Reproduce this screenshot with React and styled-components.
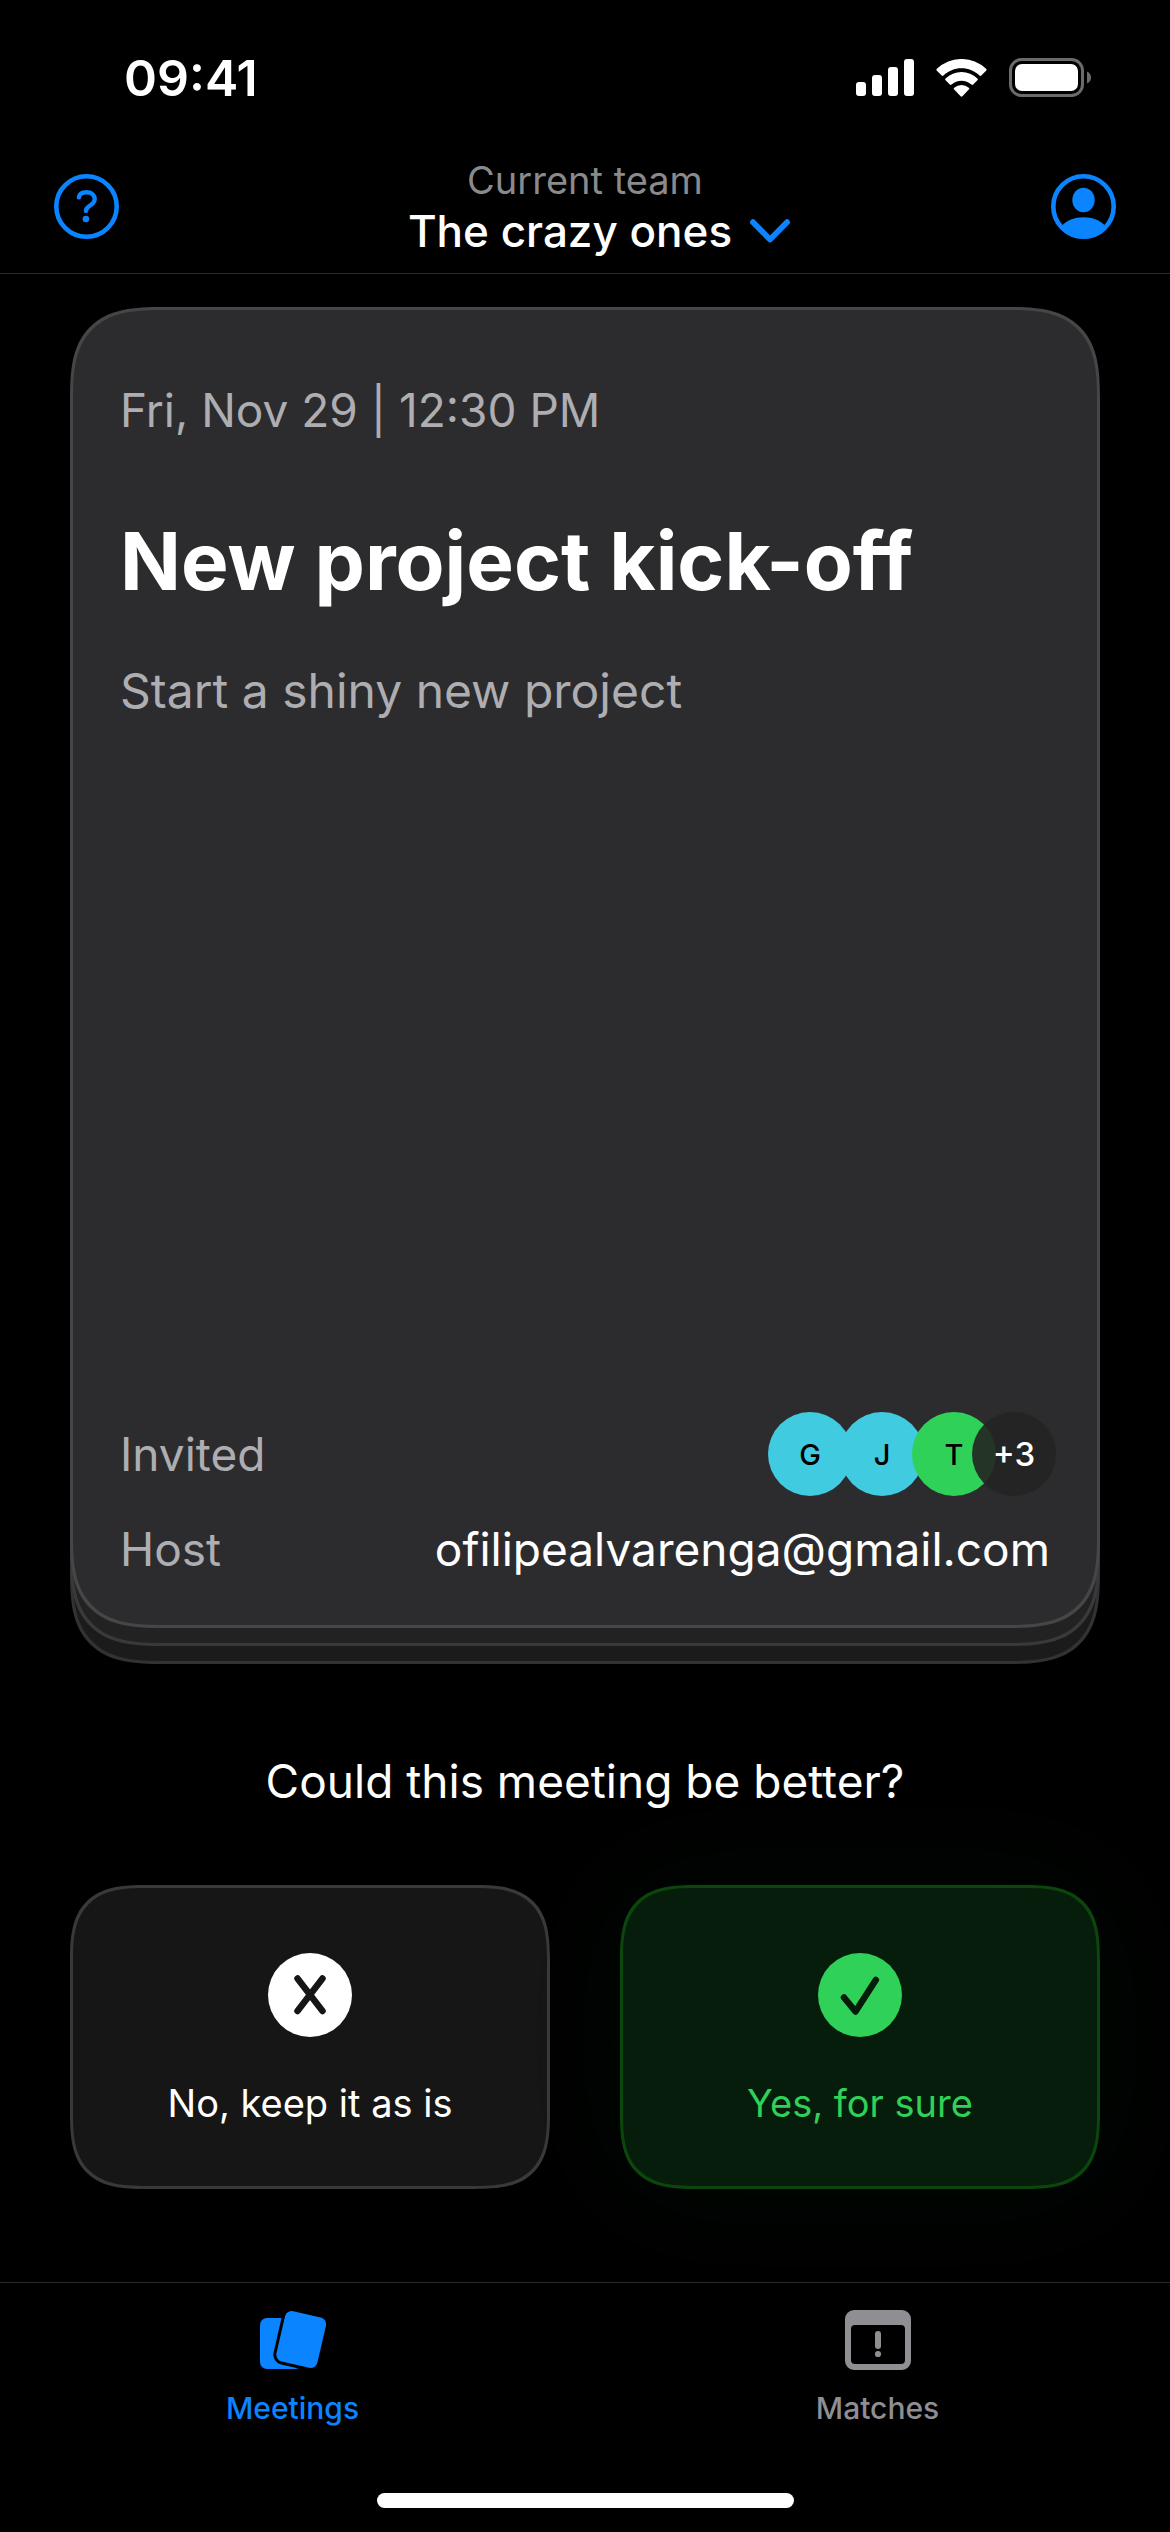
import styled, { createGlobalStyle } from "styled-components";
import { useState } from "react";

const GlobalStyle = createGlobalStyle`
  * {
    box-sizing: border-box;
  }

  body {
    margin: 0;
    background-color: #000;
    color: #fff;
    font-family: Inter, "Liberation Sans", sans-serif;
  }

  button {
    margin: 0;
    padding: 0;
    border: none;
    background: none;
    color: inherit;
    font: inherit;
    cursor: pointer;
  }

  svg {
    display: block;
    flex: none;
  }
`;

const invited = [
  { initial: "G", color: "#40cbe0" },
  { initial: "J", color: "#40cbe0" },
  { initial: "T", color: "#30d158" },
];

const SignalIcon = () => (
  <svg width="58" height="38" viewBox="0 0 58 38" fill="#fff">
    <rect x="0" y="23" width="10" height="14" rx="3" />
    <rect x="16" y="16" width="10" height="21" rx="3" />
    <rect x="32" y="8" width="10" height="29" rx="3" />
    <rect x="48" y="0" width="10" height="37" rx="3" />
  </svg>
);

const WifiIcon = () => (
  <svg width="51" height="38" viewBox="0 -1.7 51 38" fill="#fff">
    <path d="M25.5 7.6c6.9 0 13.2 2.600 18 7.200a1.300 1.300 0 0 0 1.800 0l4.800-4.800a1.300 1.300 0 0 0 0-1.900A35.700 35.700 0 0 0 .9 8.100a1.300 1.300 0 0 0 0 1.900l4.800 4.800a1.300 1.300 0 0 0 1.800 0c4.800-4.600 11.100-7.200 18-7.200z" />
    <path d="M25.5 20c3.700 0 7.200 1.400 9.900 3.900a1.300 1.300 0 0 0 1.800 0l4.200-4.300a1.300 1.300 0 0 0 0-1.900 23.200 23.200 0 0 0-31.800 0 1.300 1.300 0 0 0 0 1.900l4.200 4.300a1.300 1.300 0 0 0 1.800 0c2.700-2.500 6.200-3.900 9.900-3.900z" />
    <path d="M32.8 28.900a1.300 1.300 0 0 0 0-1.900 11.400 11.400 0 0 0-14.600 0 1.300 1.300 0 0 0 0 1.900l6.400 6.700a1.300 1.300 0 0 0 1.800 0z" />
  </svg>
);

const BatteryIcon = () => (
  <svg width="82" height="39" viewBox="0 0 82 39">
    <rect
      x="1.5"
      y="1.5"
      width="72"
      height="36"
      rx="11"
      fill="none"
      stroke="#6b6b6b"
      strokeWidth="3"
    />
    <rect x="6" y="6" width="63" height="27" rx="7" fill="#fff" />
    <path d="M78 13.5c2.500 1 4 3.300 4 6s-1.500 5-4 6z" fill="#6b6b6b" />
  </svg>
);

const HelpIcon = () => (
  <svg width="65" height="65" viewBox="0 0 65 65" fill="none">
    <circle cx="32.5" cy="32.5" r="30.2" stroke="#0a84ff" strokeWidth="4.6" />
    <path
      d="M24.900 23.400c.4-3.400 3.400-5.200 7.600-5.200 4.900 0 8.200 2.700 8.200 7 0 6.200-8.800 6.300-8.800 11.700"
      stroke="#0a84ff"
      strokeWidth="4.4"
      strokeLinecap="round"
    />
    <circle cx="31.9" cy="45" r="3.3" fill="#0a84ff" />
  </svg>
);

const ProfileIcon = () => (
  <svg width="65" height="65" viewBox="0 0 65 65" fill="#0a84ff">
    <circle
      cx="32.5"
      cy="32.5"
      r="30.2"
      fill="none"
      stroke="#0a84ff"
      strokeWidth="4.6"
    />
    <ellipse cx="32.5" cy="26" rx="11.2" ry="12.2" />
    <path d="M10.700 52C15.500 46.500 23.500 43.200 32.500 43.200S49.500 46.500 54.300 52l-1 5A32 32 0 0 1 11.700 57z" />
  </svg>
);

const ChevronIcon = () => (
  <svg width="40" height="24" viewBox="0 0 40 24" fill="none">
    <path
      d="M3 3.200 20 20.500 37 3.200"
      stroke="#0a84ff"
      strokeWidth="5.8"
      strokeLinecap="round"
      strokeLinejoin="round"
    />
  </svg>
);

const CrossIcon = () => (
  <svg width="84" height="84" viewBox="0 0 84 84" fill="none">
    <circle cx="42" cy="42" r="42" fill="#fff" />
    <path
      d="M29.500 25.500 54.500 58M54.500 25.500 29.500 58"
      stroke="#161616"
      strokeWidth="6.5"
      strokeLinecap="round"
    />
  </svg>
);

const CheckIcon = () => (
  <svg width="84" height="84" viewBox="0 0 84 84" fill="none">
    <circle cx="42" cy="42" r="42" fill="#30d158" />
    <path
      d="M26 44.500 37.500 58.500 57.800 27"
      stroke="#061c0b"
      strokeWidth="6.5"
      strokeLinecap="round"
      strokeLinejoin="round"
    />
  </svg>
);

const MeetingsIcon = () => (
  <svg width="66" height="60" viewBox="0 0 66 60" fill="currentColor">
    <rect x="0" y="8" width="42" height="51" rx="7" />
    <rect
      x="20.2"
      y="3.7"
      width="42"
      height="51.6"
      rx="7"
      transform="rotate(13 41.2 29.5)"
      stroke="#000"
      strokeWidth="6"
      paintOrder="stroke"
    />
  </svg>
);

const MatchesIcon = () => (
  <svg width="66" height="60" viewBox="0 0 66 60" fill="currentColor">
    <path
      fillRule="evenodd"
      d="M9 0h48a9 9 0 0 1 9 9v42a9 9 0 0 1-9 9H9a9 9 0 0 1-9-9V9a9 9 0 0 1 9-9zm1 15a4 4 0 0 0-4 4v31a4 4 0 0 0 4 4h46a4 4 0 0 0 4-4V19a4 4 0 0 0-4-4z"
    />
    <rect x="30" y="21" width="6" height="18" rx="3" />
    <circle cx="33" cy="44" r="3.1" />
  </svg>
);

export default function App() {
  const [tab, setTab] = useState("meetings");

  return (
    <Screen>
      <GlobalStyle />
      <StatusBar>
        <Time>09:41</Time>
        <StatusIcons>
          <SignalIcon />
          <WifiIcon />
          <BatteryIcon />
        </StatusIcons>
      </StatusBar>

      <Header>
        <button type="button" aria-label="Help">
          <HelpIcon />
        </button>
        <Team>
          <TeamCaption>Current team</TeamCaption>
          <TeamButton type="button">
            The crazy ones
            <ChevronIcon />
          </TeamButton>
        </Team>
        <button type="button" aria-label="Profile">
          <ProfileIcon />
        </button>
      </Header>

      <Main>
        <Stack>
          <Sheet $depth={2} />
          <Sheet $depth={1} />
          <Sheet as="article" $depth={0}>
            <Label>Fri, Nov 29 | 12:30 PM</Label>
            <Title>New project kick-off</Title>
            <Description>Start a shiny new project</Description>
            <Details>
              <DetailRow>
                <Label>Invited</Label>
                <Avatars>
                  {invited.map((person) => (
                    <Avatar key={person.initial} $color={person.color}>
                      {person.initial}
                    </Avatar>
                  ))}
                  <MoreAvatar>+3</MoreAvatar>
                </Avatars>
              </DetailRow>
              <DetailRow>
                <Label>Host</Label>
                <Host>ofilipealvarenga@gmail.com</Host>
              </DetailRow>
            </Details>
          </Sheet>
        </Stack>

        <Question>Could this meeting be better?</Question>

        <Answers>
          <Answer type="button">
            <CrossIcon />
            No, keep it as is
          </Answer>
          <Answer type="button" $positive>
            <CheckIcon />
            Yes, for sure
          </Answer>
        </Answers>
      </Main>

      <TabBar>
        <Tabs>
          <Tab
            type="button"
            $active={tab === "meetings"}
            onClick={() => setTab("meetings")}
          >
            <MeetingsIcon />
            Meetings
          </Tab>
          <Tab
            type="button"
            $active={tab === "matches"}
            onClick={() => setTab("matches")}
          >
            <MatchesIcon />
            Matches
          </Tab>
        </Tabs>
        <HomeIndicator />
      </TabBar>
    </Screen>
  );
}

const Screen = styled.div`
  display: flex;
  flex-direction: column;
  min-height: 100vh;
`;

const StatusBar = styled.div`
  display: flex;
  align-items: center;
  justify-content: space-between;
  height: 141px;
  padding: 14px 79px 0 124px;
`;

const Time = styled.span`
  font-size: 50px;
  font-weight: 600;
  line-height: 60px;
`;

const StatusIcons = styled.div`
  display: flex;
  align-items: center;
  gap: 22px;
`;

const Header = styled.header`
  display: flex;
  align-items: center;
  justify-content: space-between;
  padding: 14px 54px 16px;
  border-bottom: 1px solid #2a2a2b;
`;

const Team = styled.div`
  display: flex;
  flex-direction: column;
  align-items: center;
`;

const TeamCaption = styled.span`
  color: #8a8a8d;
  font-size: 38px;
  line-height: 50px;
`;

const TeamButton = styled.button`
  && {
    display: flex;
    align-items: center;
    gap: 18px;
    padding-left: 28px;
    font-size: 44px;
    font-weight: 500;
    line-height: 52px;
  }
`;

const Main = styled.main`
  display: flex;
  flex: 1;
  flex-direction: column;
  padding: 33px 70px 93px;
`;

const Stack = styled.div`
  display: grid;
  flex: 1;
`;

const sheetColors = [
  { background: "#2c2c2e", border: "#464648" },
  { background: "#222223", border: "#39393b" },
  { background: "#1b1b1c", border: "#323234" },
];

// every sheet shares one grid cell, the deeper ones peek out below
const Sheet = styled.div`
  display: flex;
  grid-area: 1 / 1;
  flex-direction: column;
  margin: ${({ $depth }) => `${$depth * 18}px 0 ${36 - $depth * 18}px`};
  padding: 72px 47px 48px;
  border: 3px solid ${({ $depth }) => sheetColors[$depth].border};
  border-radius: 68px;
  background-color: ${({ $depth }) => sheetColors[$depth].background};

  @supports (corner-shape: squircle) {
    border-radius: 92px;
    corner-shape: superellipse(1.5);
  }
`;

const Label = styled.span`
  color: #aeaeb2;
  font-size: 46px;
  line-height: 56px;
`;

const Title = styled.h1`
  margin: 73px 0 0;
  font-size: 80px;
  font-weight: 700;
  line-height: 100px;
`;

const Description = styled.p`
  margin: 50px 0 0;
  color: #aeaeb2;
  font-size: 48px;
  line-height: 60px;
`;

const Details = styled.div`
  display: flex;
  flex-direction: column;
  gap: 25px;
  margin-top: auto;
`;

const DetailRow = styled.div`
  display: flex;
  align-items: center;
  justify-content: space-between;
`;

const Avatars = styled.div`
  display: flex;
  margin-right: -6px;
`;

const Avatar = styled.span`
  display: flex;
  align-items: center;
  justify-content: center;
  width: 84px;
  height: 84px;
  border-radius: 50%;
  background-color: ${({ $color }) => $color};
  color: #000;
  font-size: 29px;
  font-weight: 500;

  & + & {
    margin-left: -12px;
  }
`;

const MoreAvatar = styled(Avatar)`
  background-color: rgba(35, 35, 35, 0.9);
  color: #fff;
  font-size: 33px;

  ${Avatar} + & {
    margin-left: -24px;
  }
`;

const Host = styled.span`
  font-size: 46px;
  line-height: 56px;
`;

const Question = styled.h2`
  margin: 87px 0 74px;
  font-size: 46px;
  font-weight: 400;
  line-height: 60px;
  text-align: center;
`;

const Answers = styled.div`
  display: grid;
  grid-template-columns: 1fr 1fr;
  gap: 70px;
`;

const Answer = styled.button`
  && {
    display: flex;
    flex-direction: column;
    align-items: center;
    gap: 42px;
    padding: 65px 20px 59px;
    border: 3px solid ${({ $positive }) => ($positive ? "#0b460d" : "#39393b")};
    border-radius: 56px;
    background-color: ${({ $positive }) => ($positive ? "#061d0b" : "#161616")};
    box-shadow: ${({ $positive }) =>
      $positive ? "0 0 120px rgba(48, 209, 88, 0.05)" : "none"};
    color: ${({ $positive }) => ($positive ? "#30d158" : "#fff")};
    font-size: 38px;
    line-height: 48px;
  }

  @supports (corner-shape: squircle) {
    && {
      border-radius: 76px;
      corner-shape: superellipse(1.5);
    }
  }
`;

const TabBar = styled.footer`
  display: flex;
  flex-direction: column;
  align-items: center;
  border-top: 1px solid #2a2a2b;
`;

const Tabs = styled.nav`
  display: grid;
  grid-template-columns: 1fr 1fr;
  width: 100%;
`;

const Tab = styled.button`
  && {
    display: flex;
    flex-direction: column;
    align-items: center;
    gap: 20px;
    padding-top: 27px;
    color: ${({ $active }) => ($active ? "#0a84ff" : "#8e8e93")};
    font-size: 30px;
    font-weight: 500;
    line-height: 36px;
  }
`;

const HomeIndicator = styled.div`
  width: 417px;
  height: 15px;
  margin: 67px 0 24px;
  border-radius: 8px;
  background-color: #fff;
`;
